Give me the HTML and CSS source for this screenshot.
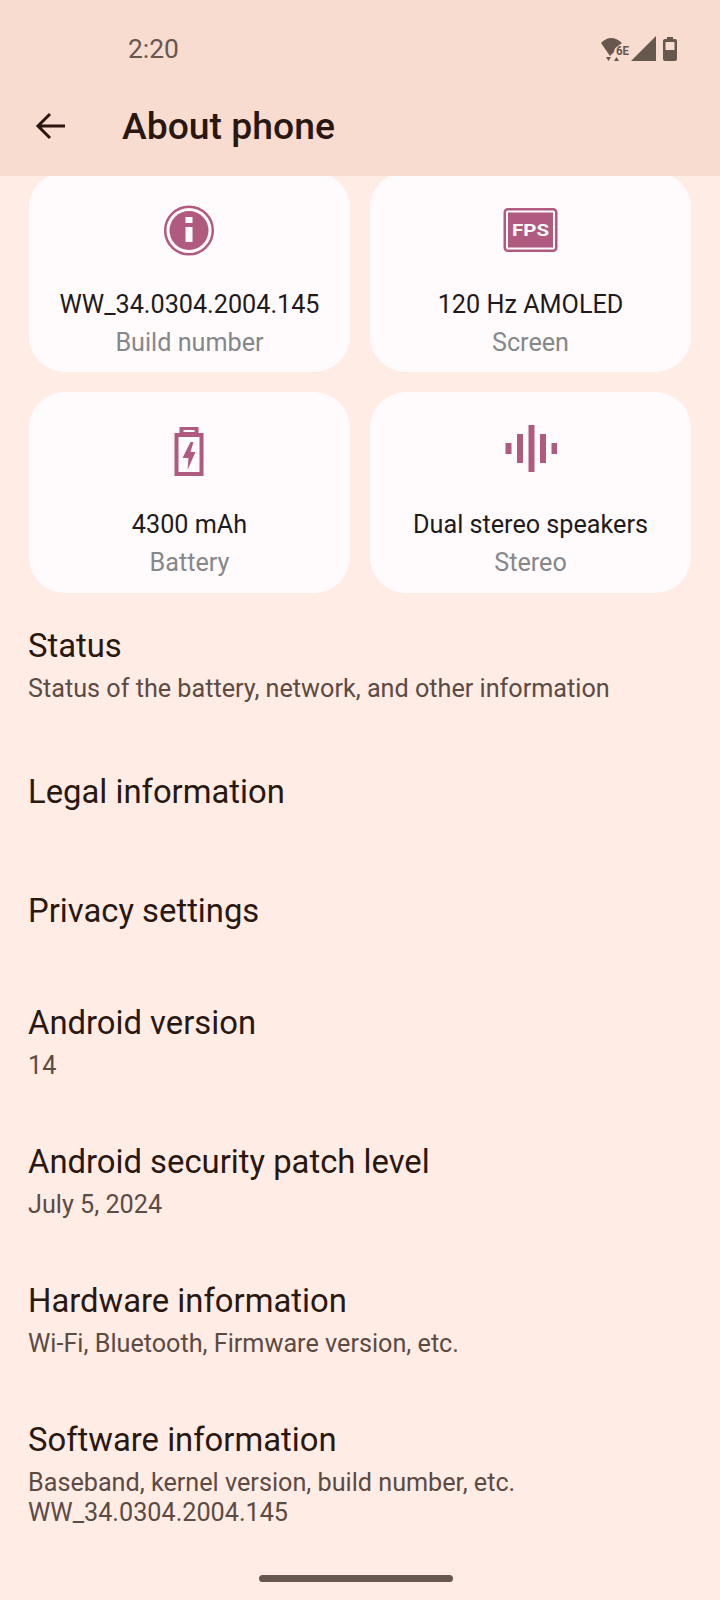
FILE: index.html
```html
<!DOCTYPE html>
<html lang="en">
<head>
    <meta charset="UTF-8">
    <meta name="viewport" content="width=device-width, initial-scale=1.0">
    <title>About phone</title>
    <link rel="stylesheet" href="styles.css">
</head>
<body>
    <div class="page">
        <header class="top">
            <div class="status-bar">
                <span class="clock">2:20</span>
                <div class="status-icons">
                    <svg class="wifi" width="30" height="26" viewBox="0 0 30 26">
                        <path d="M0 7 Q10 -3 21 7 L17 10 Q13 12 13 16 L9 20 Z" fill="#66574f"/>
                        <path d="M5 21 h5 l-2.500 4 Z M13 25 h5 l-2.500 -4 Z" fill="#66574f"/>
                        <text x="15" y="19" class="wifi-label" textLength="13" lengthAdjust="spacingAndGlyphs">6E</text>
                    </svg>
                    <svg width="26" height="26" viewBox="0 0 26 26">
                        <path d="M0 25 L25 0 V25 Z" fill="#66574f"/>
                    </svg>
                    <svg width="16" height="26" viewBox="0 0 16 26">
                        <path fill-rule="evenodd" d="M5 1 H11 V3 H13 Q15 3 15 5 V23 Q15 25 13 25 H3 Q1 25 1 23 V5 Q1 3 3 3 H5 Z M3.500 6 V14 H12.500 V6 Z" fill="#66574f"/>
                    </svg>
                </div>
            </div>
            <div class="app-bar">
                <svg class="back" width="32" height="32" viewBox="0 0 32 32">
                    <path d="M30 16 H3 M15 4 L3 16 L15 28" fill="none" stroke="#2a1710" stroke-width="3"/>
                </svg>
                <h1>About phone</h1>
            </div>
        </header>

        <main class="content">
            <div class="cards">
                <div class="card">
                    <svg class="card-icon" width="52" height="52" viewBox="0 0 52 52">
                        <circle cx="25" cy="26.500" r="23.800" fill="none" stroke="#b15a80" stroke-width="2.500"/>
                        <circle cx="25" cy="26.500" r="19.500" fill="#b15a80"/>
                        <rect x="21.500" y="13" width="7" height="6" fill="#fffbfd"/>
                        <rect x="21.500" y="23" width="7" height="15" fill="#fffbfd"/>
                    </svg>
                    <div class="card-value">WW_34.0304.2004.145</div>
                    <div class="card-label">Build number</div>
                </div>
                <div class="card">
                    <svg class="card-icon" width="56" height="52" viewBox="0 0 56 52">
                        <rect x="1.750" y="5.250" width="51.500" height="41.500" rx="3" fill="none" stroke="#b15a80" stroke-width="2.500"/>
                        <rect x="5" y="8.500" width="45" height="35" fill="#b15a80"/>
                        <text x="27.500" y="31.500" class="fps-label" textLength="37" lengthAdjust="spacingAndGlyphs">FPS</text>
                    </svg>
                    <div class="card-value">120 Hz AMOLED</div>
                    <div class="card-label">Screen</div>
                </div>
                <div class="card">
                    <svg class="card-icon" width="52" height="52" viewBox="0 0 52 52">
                        <g transform="translate(10.500 3)">
                            <path fill-rule="evenodd" d="M5 0 H24 V6 H29 V49 H0 V6 H5 Z M9 3 V5 H20 V3 Z M4 10 V45 H25 V10 Z" fill="#b15a80"/>
                            <path d="M16 15 L8 31 H14 L13 43 L21 25 H16 L19 15 Z" fill="#b15a80"/>
                        </g>
                    </svg>
                    <div class="card-value">4300 mAh</div>
                    <div class="card-label">Battery</div>
                </div>
                <div class="card">
                    <svg class="card-icon" width="52" height="52" viewBox="0 0 52 52">
                        <rect x="0.500" y="19" width="6" height="11" fill="#b15a80"/>
                        <rect x="12" y="10" width="6" height="29" fill="#b15a80"/>
                        <rect x="23.500" y="1" width="6" height="47" fill="#b15a80"/>
                        <rect x="35" y="10" width="6" height="29" fill="#b15a80"/>
                        <rect x="46.500" y="19" width="6" height="11" fill="#b15a80"/>
                    </svg>
                    <div class="card-value">Dual stereo speakers</div>
                    <div class="card-label">Stereo</div>
                </div>
            </div>

            <div class="item">
                <div class="item-title">Status</div>
                <div class="item-sub">Status of the battery, network, and other information</div>
            </div>
            <div class="item single">
                <div class="item-title">Legal information</div>
            </div>
            <div class="item single">
                <div class="item-title">Privacy settings</div>
            </div>
            <div class="item">
                <div class="item-title">Android version</div>
                <div class="item-sub">14</div>
            </div>
            <div class="item">
                <div class="item-title">Android security patch level</div>
                <div class="item-sub">July 5, 2024</div>
            </div>
            <div class="item">
                <div class="item-title">Hardware information</div>
                <div class="item-sub">Wi-Fi, Bluetooth, Firmware version, etc.</div>
            </div>
            <div class="item">
                <div class="item-title">Software information</div>
                <div class="item-sub">Baseband, kernel version, build number, etc.<br>WW_34.0304.2004.145</div>
            </div>
        </main>

        <div class="nav-pill"></div>
    </div>
</body>
</html>
```

FILE: styles.css
```css
body {
    margin: 0;
    font-family: 'Roboto', 'Liberation Sans', sans-serif;
    background-color: #ffece5;
    color: #2a1710;
}
.page {
    position: relative;
    display: flex;
    flex-direction: column;
    height: 1600px;
    overflow: hidden;
}
.top {
    flex: none;
    height: 176px;
    background-color: #f8dcd0;
}
.status-bar {
    display: flex;
    align-items: center;
    justify-content: space-between;
    height: 88px;
    padding: 10px 42px 0 128px;
    box-sizing: border-box;
}
.clock {
    font-size: 26.4px;
    color: #66574f;
}
.status-icons {
    display: flex;
    align-items: center;
    gap: 5px;
}
.wifi {
    margin-right: -5px;
}
.wifi-label {
    font-family: 'Roboto', sans-serif;
    font-size: 12.5px;
    font-weight: 700;
    fill: #66574f;
}
.app-bar {
    display: flex;
    align-items: center;
    height: 76px;
}
.back {
    margin-left: 35px;
    margin-right: 55px;
}
h1 {
    margin: 0;
    font-size: 37.3px;
    font-weight: 500;
}
.content {
    flex: 1;
    min-height: 0;
    overflow: hidden;
}
.cards {
    display: grid;
    grid-template-columns: 321px 321px;
    grid-template-rows: 200px 201px;
    gap: 20px;
    margin-top: -4px;
    padding: 0 29px;
}
.card {
    display: flex;
    flex-direction: column;
    align-items: center;
    background-color: #fffbfd;
    border-radius: 36px;
    padding-top: 32px;
    box-sizing: border-box;
}
.card-icon {
    height: 52px;
    margin-bottom: 31.5px;
}
.card-value {
    font-size: 25.2px;
    line-height: 34px;
    color: #1f1a1c;
}
.card-label {
    font-size: 25.2px;
    line-height: 41px;
    color: #86878b;
}
.fps-label {
    font-family: 'Roboto', sans-serif;
    font-size: 16px;
    font-weight: 700;
    text-anchor: middle;
    fill: #fffbfd;
}
.item {
    padding: 30px 28px 28.5px;
}
.single {
    display: flex;
    align-items: center;
    box-sizing: border-box;
    height: 119px;
    padding-top: 0;
    padding-bottom: 0;
}
.item-title {
    font-size: 32.8px;
    line-height: 46px;
}
.item-sub {
    margin-top: 5px;
    font-size: 25.2px;
    line-height: 29.5px;
    color: #5c4a43;
}
.nav-pill {
    position: absolute;
    left: 259px;
    bottom: 18px;
    width: 194px;
    height: 7px;
    border-radius: 4px;
    background-color: #66574f;
}
```
